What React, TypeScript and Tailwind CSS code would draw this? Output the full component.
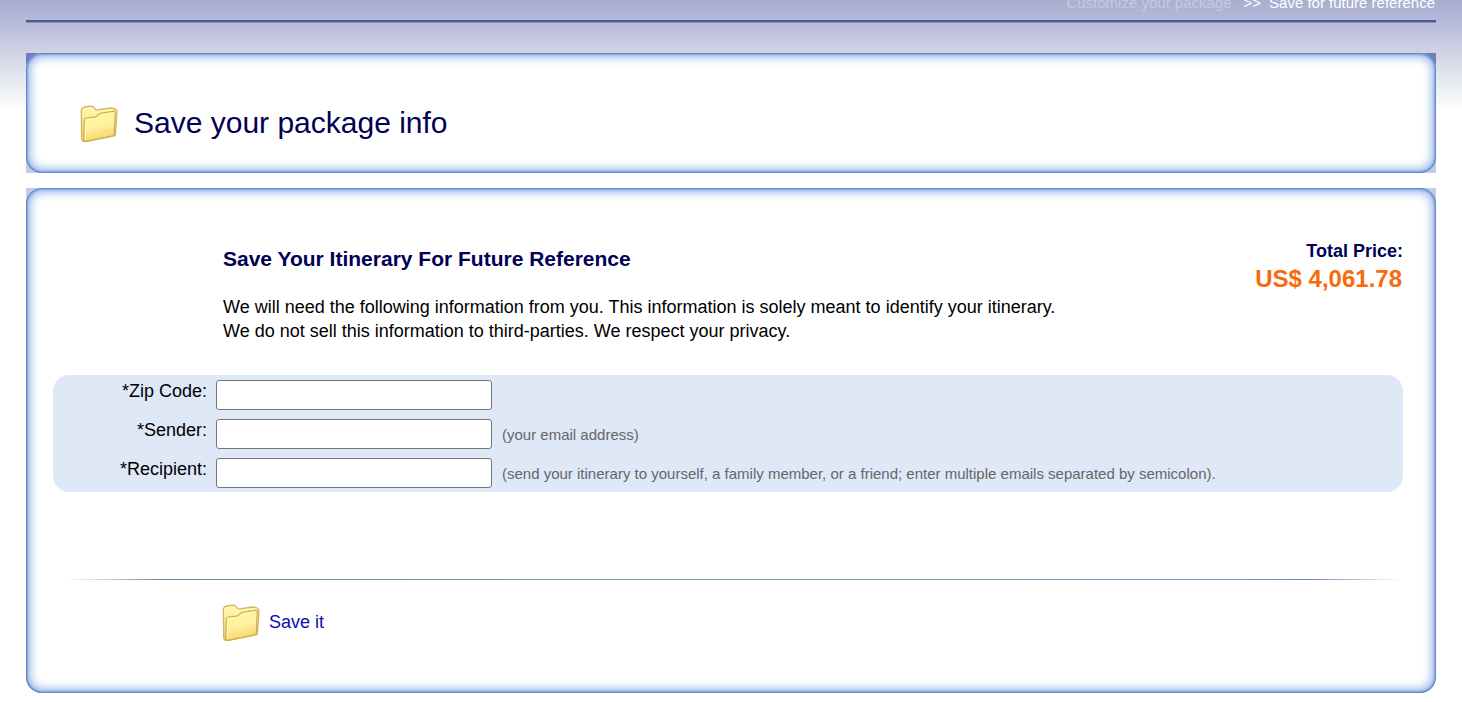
import type { ReactNode } from "react";

function FolderIcon({ id }: { id: string }) {
  return (
    <svg width="38" height="38" viewBox="0 0 38 38" aria-hidden="true" className="shrink-0">
      <defs>
        <linearGradient id={id + "-front"} x1="0" y1="0" x2="0.25" y2="1">
          <stop offset="0" stopColor="#fff68c" />
          <stop offset="0.55" stopColor="#fff2a4" />
          <stop offset="1" stopColor="#fbd769" />
        </linearGradient>
        <linearGradient id={id + "-back"} x1="0" y1="0" x2="0" y2="1">
          <stop offset="0" stopColor="#fff9b8" />
          <stop offset="1" stopColor="#f3d660" />
        </linearGradient>
      </defs>
      <path
        d="M1.3 5.5Q2 2.3 4.5 2L11 1.2Q13.4 1 14.6 3.2Q15.6 5 17.5 4.8L30.5 3Q36.6 3.6 37 6.5L35.2 30.5L5 36.7Q2 36.8 1.7 33Z"
        fill={"url(#" + id + "-back)"}
        stroke="#d3b662"
        strokeWidth="1.3"
        strokeLinejoin="round"
      />
      <path
        d="M4.2 15.4Q4.3 13.4 6.3 13L14.5 12.2Q16.2 11.8 17.6 10.4Q19.4 8.6 21.5 8.2L33.5 6.3Q35.4 6.3 35.3 8.2L34.3 28.8Q34.2 30.3 32.6 30.8L6 36.3Q4 36.6 3.9 34.8Z"
        fill={"url(#" + id + "-front)"}
        stroke="#d0ad50"
        strokeWidth="1.2"
        strokeLinejoin="round"
      />
      <path d="M5.4 34.5L5.7 14.8L15 13.5Q17 13 18.6 11.4Q20.2 9.8 22 9.4L33.8 7.6" fill="none" stroke="#fffbc4" strokeWidth="1" />
    </svg>
  );
}

function Panel({ corners, children }: { corners: string; children: ReactNode }) {
  return (
    <section className={corners}>
      <div className="rounded-2xl bg-white p-0.5 shadow-[inset_0_0_0_1px_#6389cb,inset_0_0_2px_2px_#82a3de,inset_0_0_9px_5px_#a3bdeb]">
        {children}
      </div>
    </section>
  );
}

const fields = [
  { id: "zip", label: "*Zip Code:", type: "text", hint: "" },
  { id: "sender", label: "*Sender:", type: "email", hint: "(your email address)" },
  {
    id: "recipient",
    label: "*Recipient:",
    type: "text",
    hint: "(send your itinerary to yourself, a family member, or a friend; enter multiple emails separated by semicolon).",
  },
];

export default function App() {
  return (
    <div className="bg-[linear-gradient(to_bottom,#a9aed0_0px,#b9bcdb_25px,#ced1e2_50px,#e6e8f1_80px,#ffffff_110px)] px-[26px] pb-2 font-['Liberation_Sans',Arial,sans-serif] text-lg leading-6 text-black">
      <nav className="flex h-5 items-end justify-end overflow-hidden pr-px pb-2 text-[15px] leading-[18px] text-white">
        <a href="#customize" className="text-[#c6c9e3]">Customize your package</a>
        <span className="mr-2 ml-3">&gt;&gt;</span>
        <span>Save for future reference</span>
      </nav>
      <div className="h-[3px] border-t-2 border-[#465c96] bg-[#8793bd]" />

      <main className="flex flex-col gap-[15px] pt-[30px]">
        <Panel corners="bg-[linear-gradient(to_bottom,#6e80bc_50%,#c3cce2_50%)]">
          <div className="flex h-[116px] items-center gap-4 px-[52px] pt-[22px]">
            <FolderIcon id="title-folder" />
            <h1 className="pb-0.5 text-3xl text-[#000054]">Save your package info</h1>
          </div>
        </Panel>

        <Panel corners="bg-[linear-gradient(to_bottom,#c3cce2_50%,#ffffff_50%)]">
          <form onSubmit={(event) => event.preventDefault()} className="pt-[49px] pr-[31px] pb-[49px] pl-[25px]">
            <div className="flex justify-between pl-[170px]">
              <div className="pt-1.5">
                <h2 className="text-[21px] leading-7 font-bold text-[#000054]">
                  Save Your Itinerary For Future Reference
                </h2>
                <p className="mt-[22px]">
                  We will need the following information from you. This information is solely meant to identify your
                  itinerary.
                  <br />
                  We do not sell this information to third-parties. We respect your privacy.
                </p>
              </div>
              <div className="text-right font-bold">
                <div className="text-[#000054]">Total Price:</div>
                <div className="mt-0.5 pr-px text-2xl leading-7 text-[#f96a0b]">US$ 4,061.78</div>
              </div>
            </div>

            <div className="mt-8 rounded-2xl bg-[#dfe8f7]">
              {fields.map((field) => (
                <div key={field.id} className="flex h-[39px] items-start">
                  <label htmlFor={field.id} className="w-[154px] shrink-0 pt-1 text-right">
                    {field.label}
                  </label>
                  <input
                    id={field.id}
                    type={field.type}
                    className="mt-[5px] ml-[9px] h-[30px] w-[276px] shrink-0 rounded-[3px] border border-[#767676] bg-white px-1"
                  />
                  <span className="mt-[9px] ml-[10px] text-[15px] text-[#666666]">{field.hint}</span>
                </div>
              ))}
            </div>

            <div className="mt-[87px] ml-3 h-px bg-[linear-gradient(to_right,#ffffff,#b9bdd6_4%,#6789a4_7%,#7da3aa_50%,#7f9fc4_85%,#6789b4_93%,#ffffff)]" />

            <button type="submit" className="mt-6 ml-[169px] flex cursor-pointer items-center gap-[9px] text-[#0d0db0]">
              <FolderIcon id="save-folder" />
              <span className="pb-0.5">Save it</span>
            </button>
          </form>
        </Panel>
      </main>
    </div>
  );
}
